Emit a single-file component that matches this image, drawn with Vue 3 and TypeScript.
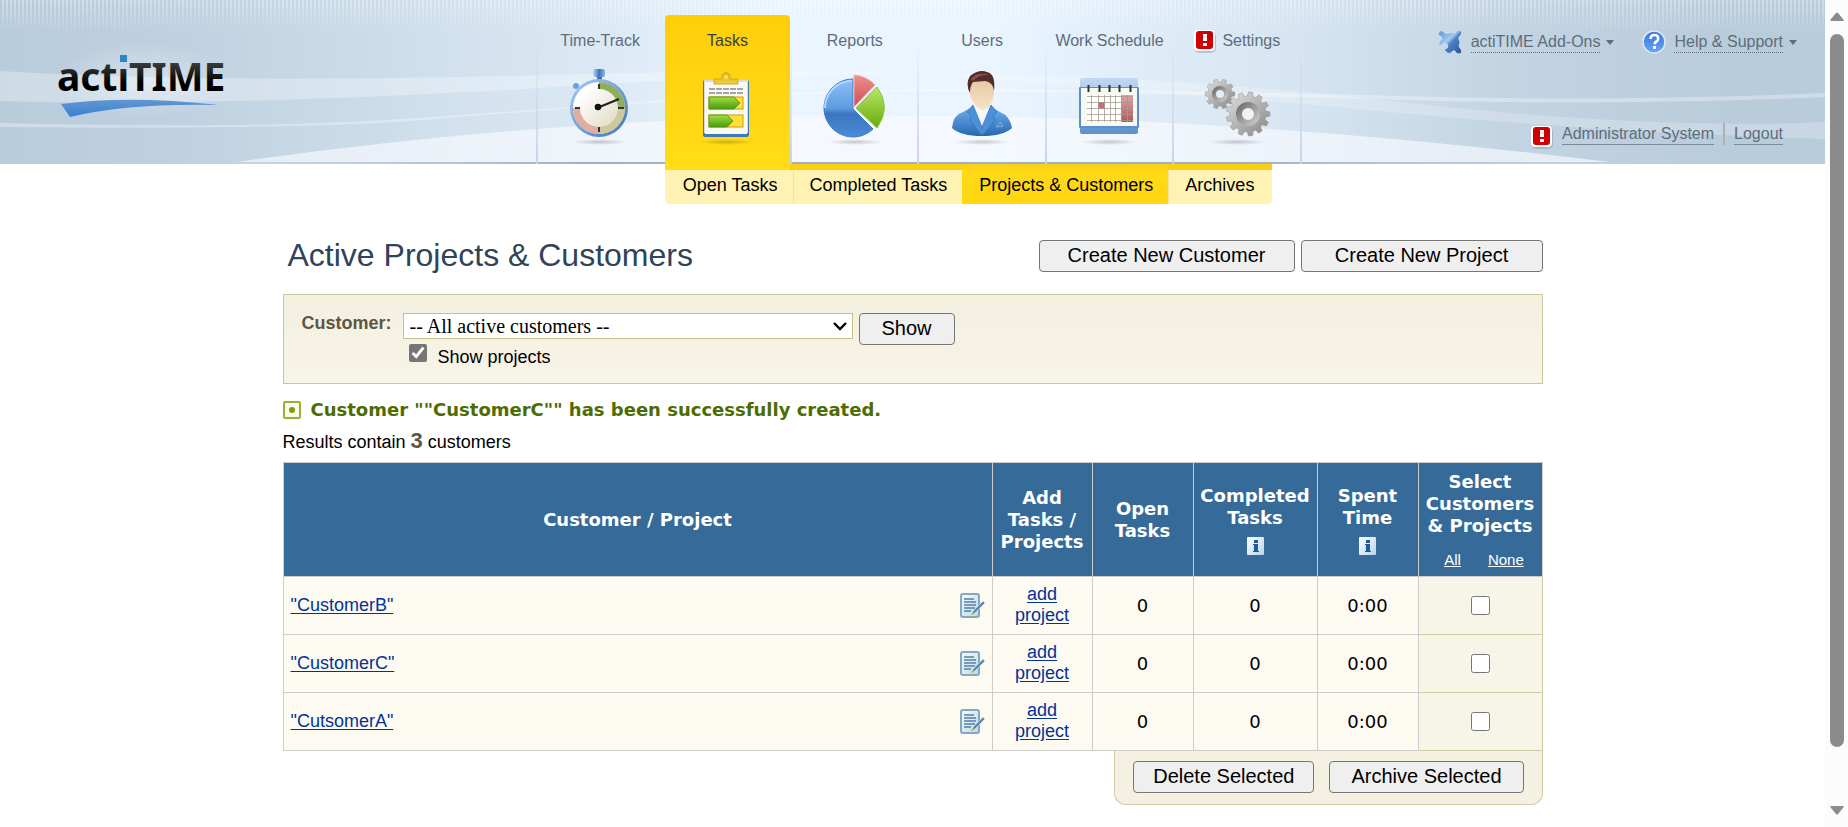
<script setup lang="ts">
import { ref } from 'vue'

interface Tab {
  id: string
  label: string
  alert?: boolean
}

interface Row {
  name: string
  open: number
  completed: number
  spent: string
}

const tabs: Tab[] = [
  { id: 'time', label: 'Time-Track' },
  { id: 'tasks', label: 'Tasks' },
  { id: 'reports', label: 'Reports' },
  { id: 'users', label: 'Users' },
  { id: 'schedule', label: 'Work Schedule' },
  { id: 'settings', label: 'Settings', alert: true },
]
const activeTab = 'tasks'

const subTabs: string[] = ['Open Tasks', 'Completed Tasks', 'Projects & Customers', 'Archives']
const activeSubTab = 'Projects & Customers'

const rows: Row[] = [
  { name: '"CustomerB"', open: 0, completed: 0, spent: '0:00' },
  { name: '"CustomerC"', open: 0, completed: 0, spent: '0:00' },
  { name: '"CutsomerA"', open: 0, completed: 0, spent: '0:00' },
]

const showProjects = ref(true)
const selected = ref<string[]>([])

function selectAll(): void {
  selected.value = rows.map((r) => r.name)
}
function selectNone(): void {
  selected.value = []
}

function gear(cx: number, cy: number, r: number, inner: number, teeth: number): string {
  const points: string[] = []
  const step = (Math.PI * 2) / teeth
  for (let i = 0; i < teeth; i++) {
    const a = i * step
    const corners: [number, number][] = [
      [-0.34, inner],
      [-0.2, r],
      [0.2, r],
      [0.34, inner],
    ]
    for (const [offset, radius] of corners) {
      const t = a + offset * step
      points.push(`${(cx + radius * Math.cos(t)).toFixed(2)},${(cy + radius * Math.sin(t)).toFixed(2)}`)
    }
  }
  return points.join(' ')
}
const smallGear = gear(19, 27, 15, 12, 10)
const bigGear = gear(47, 47, 22, 18, 13)
</script>

<template>
  <div class="screen">
    <div class="page">
      <header class="top">
        <svg class="waves" viewBox="0 0 1825 164" preserveAspectRatio="none" aria-hidden="true">
          <path d="M0 71 C180 82 380 79 540 75 S800 71 930 73 C760 75 620 82 540 88 C380 98 170 106 0 101Z" fill="#fff" opacity=".3" />
          <path d="M0 123 Q250 129 400 119 T664 100 Q800 91 930 89 Q1200 90 1400 96 T1825 93 L1825 97 Q1600 106 1400 100 T930 91 Q800 93 664 102 T400 122 Q250 130 0 127Z" fill="#fff" opacity=".32" />
          <path d="M930 73 Q1150 74 1400 102 T1825 122 L1825 139 Q1600 132 1400 113 T930 75Z" fill="#fff" opacity=".22" />
          <path d="M236 162 Q560 116 860 116 Q1200 112 1610 162Z" fill="#fafaff" opacity=".65" />
        </svg>
        <div class="stripes"></div>

        <div class="brand">
          <svg class="logo" width="190" height="80" viewBox="0 0 190 80" role="img" aria-label="actiTIME">
            <defs>
              <linearGradient id="ink" gradientUnits="userSpaceOnUse" x1="0" y1="20" x2="0" y2="51">
                <stop offset="0" stop-color="#444" />
                <stop offset=".75" stop-color="#000" />
              </linearGradient>
              <linearGradient id="stem" gradientUnits="userSpaceOnUse" x1="0" y1="20" x2="0" y2="51">
                <stop offset=".27" stop-color="#333" stop-opacity="0" />
                <stop offset=".27" stop-color="#333" />
                <stop offset=".75" stop-color="#000" />
              </linearGradient>
              <linearGradient id="swoosh" x1="0" y1="0" x2="0" y2="1">
                <stop offset="0" stop-color="#6397d1" />
                <stop offset="1" stop-color="#3580d4" />
              </linearGradient>
              <radialGradient id="glow">
                <stop offset="0" stop-color="#fff" stop-opacity=".38" />
                <stop offset="1" stop-color="#fff" stop-opacity="0" />
              </radialGradient>
            </defs>
            <ellipse cx="98" cy="40" rx="92" ry="38" fill="url(#glow)" />
            <text x="9" y="51" class="logo-text" fill="url(#ink)">act<tspan fill="url(#stem)">i</tspan>TIME</text>
            <rect x="72" y="15" width="7" height="7" fill="#2a86cc" />
            <path d="M13 64 Q80 55 171 65 Q80 63 22 77Z" fill="url(#swoosh)" />
          </svg>
        </div>

        <nav class="tabs" aria-label="Main">
          <div v-for="tab in tabs" :key="tab.id" class="tab" :class="{ active: tab.id === activeTab }">
            <a href="#" class="tab-link">
              <span class="tab-label">
                <svg v-if="tab.alert" class="alert" width="24" height="24" viewBox="0 0 24 24" aria-hidden="true">
                  <rect x="1" y="2" width="22" height="22" rx="5" fill="#7d8c99" opacity=".4" />
                  <rect x="1" y="1" width="21" height="21" rx="4" fill="#fff" />
                  <rect x="3" y="2" width="17" height="18" rx="3" fill="#d00000" />
                  <path d="M10 5h4v7h-4zM10 14h4v3h-4z" fill="#fff" />
                </svg>
                {{ tab.label }}
              </span>
              <svg class="tab-icon" width="72" height="78" viewBox="0 0 72 78" aria-hidden="true">
                <defs>
                  <radialGradient id="shade">
                    <stop offset="0" stop-color="#000" stop-opacity=".2" />
                    <stop offset="1" stop-color="#000" stop-opacity="0" />
                  </radialGradient>
                </defs>
                <ellipse cx="36" cy="75" rx="28" ry="3" fill="url(#shade)" />

                <g v-if="tab.id === 'time'">
                  <defs>
                    <linearGradient id="rim" x1="0" y1="0" x2="1" y2="1">
                      <stop offset="0" stop-color="#a9cdf6" />
                      <stop offset="1" stop-color="#3c74c0" />
                    </linearGradient>
                    <linearGradient id="face" x1="0" y1="0" x2="1" y2="1">
                      <stop offset=".2" stop-color="#fff" />
                      <stop offset="1" stop-color="#d9d3b4" />
                    </linearGradient>
                    <linearGradient id="knob">
                      <stop offset="0" stop-color="#bcd9f7" />
                      <stop offset=".5" stop-color="#3d74b8" />
                      <stop offset="1" stop-color="#8bb6e6" />
                    </linearGradient>
                  </defs>
                  <circle cx="12" cy="19" r="3" fill="#6da0de" />
                  <rect x="33" y="8" width="5" height="5" fill="#3d74b8" />
                  <rect x="29" y="2" width="12" height="8" rx="2" fill="url(#knob)" />
                  <circle cx="35" cy="41" r="29" fill="url(#rim)" />
                  <circle cx="35" cy="41" r="26" fill="url(#face)" />
                  <path d="M35 15a26 26 0 0 1 26 26h-7a19 19 0 0 0-19-19z" fill="#8eae5c" />
                  <path d="M61 41a26 26 0 0 1-26 26v-7a19 19 0 0 0 19-19z" fill="#cfc89c" />
                  <path d="M35 67a26 26 0 0 1-26-26h7a19 19 0 0 0 19 19z" fill="#e0ada0" />
                  <path d="M35 17v5M35 60v5M11 41h5M54 41h6" stroke="#333" stroke-width="2" />
                  <path d="M33 41l22-9" stroke="#222" stroke-width="2.2" />
                  <circle cx="34" cy="40" r="3.3" fill="#111" />
                </g>

                <g v-else-if="tab.id === 'tasks'">
                  <defs>
                    <linearGradient id="bar" x1="0" y1="0" x2="0" y2="1">
                      <stop offset="0" stop-color="#a3df45" />
                      <stop offset="1" stop-color="#489b0b" />
                    </linearGradient>
                    <linearGradient id="clip" x1="0" y1="0" x2="0" y2="1">
                      <stop offset="0" stop-color="#dab422" />
                      <stop offset="1" stop-color="#f1cf40" />
                    </linearGradient>
                  </defs>
                  <rect x="12" y="13" width="46" height="57" rx="2" fill="#3c79bc" />
                  <path d="M13 13h44v53H13z" fill="#d6dcdf" />
                  <rect x="14" y="15" width="42" height="52" fill="#faf9f4" />
                  <path d="M18 22h35M18 26h35" stroke="#a3a5ab" stroke-width="2" stroke-dasharray="6 1" />
                  <g stroke="#c79d12">
                    <rect x="18" y="30" width="34" height="12" fill="#ffdf34" />
                    <rect x="18" y="48" width="34" height="12" fill="#ffdf34" />
                  </g>
                  <path d="M18 30h25l6 6-6 6H18z" fill="url(#bar)" stroke="#589f15" />
                  <path d="M18 48h18l6 6-6 6H18z" fill="url(#bar)" stroke="#589f15" />
                  <path d="M23 12h8V8q4-5 8 0v4h8v5H23z" fill="url(#clip)" stroke="#d2ac25" />
                  <circle cx="35" cy="10" r="2" fill="#ffe25f" />
                </g>

                <g v-else-if="tab.id === 'reports'">
                  <defs>
                    <linearGradient id="pb" x1="0" y1="0" x2="0" y2="1">
                      <stop offset="0" stop-color="#8ec1f5" />
                      <stop offset=".5" stop-color="#5e9cdf" />
                      <stop offset=".6" stop-color="#3b75bf" />
                      <stop offset="1" stop-color="#4b8bd7" />
                    </linearGradient>
                    <linearGradient id="pg" x1="0" y1="0" x2="0" y2="1">
                      <stop offset="0" stop-color="#b9e866" />
                      <stop offset="1" stop-color="#66ab0d" />
                    </linearGradient>
                    <linearGradient id="pr" x1="0" y1="0" x2="0" y2="1">
                      <stop offset="0" stop-color="#f18e8e" />
                      <stop offset="1" stop-color="#c75057" />
                    </linearGradient>
                  </defs>
                  <path d="M34 12a29 29 0 1 0 20 50L34 42z" fill="url(#pb)" stroke="#3d7cc9" />
                  <path d="M33 14a27 27 0 0 0-27 27" fill="none" stroke="#b0d6ff" stroke-width="2" />
                  <path d="M35 8q13 1 21 10L35 40z" fill="url(#pr)" stroke="#f2b4b4" />
                  <path d="M58 20q15 20 0 41L37 41z" fill="url(#pg)" stroke="#8bc43c" />
                </g>

                <g v-else-if="tab.id === 'users'">
                  <defs>
                    <linearGradient id="suit" x1="0" y1="0" x2="0" y2="1">
                      <stop offset="0" stop-color="#70b1ef" />
                      <stop offset="1" stop-color="#2867ae" />
                    </linearGradient>
                    <linearGradient id="skin" x1="0" y1="0" x2="0" y2="1">
                      <stop offset="0" stop-color="#e8c7a0" />
                      <stop offset="1" stop-color="#f7e3c8" />
                    </linearGradient>
                  </defs>
                  <path d="M6 61q1-13 11-16l9-5h19l9 5q10 4 12 16-9 8-30 8T6 61z" fill="url(#suit)" />
                  <path d="M28 37h15l3 6-10 24-10-24z" fill="#f4f7f8" />
                  <path d="M27 38l-6 7 4 4-1 4 11 15 1-8zM45 38l6 7-4 4 2 4-12 15-1-8z" fill="#4c91d7" stroke="#2f70ba" stroke-width=".7" />
                  <path d="M23 21q1-9 13-9 12 1 12 9v6q-2 11-7 14-5 4-10-1-7-7-7-14z" fill="url(#skin)" />
                  <path d="M24 26q-5-9 0-17Q33 2 41 5q9 2 7 19-1-9-9-10l-12 1q-3 4-3 11z" fill="#532d2b" />
                  <path d="M25 12q6-8 19-4-12-1-17 6z" fill="#8e5149" />
                  <path d="M50 60l4-5 3 4z" fill="none" stroke="#7db6e9" />
                </g>

                <g v-else-if="tab.id === 'schedule'">
                  <defs>
                    <linearGradient id="cal" x1="0" y1="0" x2="0" y2="1">
                      <stop offset="0" stop-color="#c3d9f2" />
                      <stop offset="1" stop-color="#5990cd" />
                    </linearGradient>
                    <linearGradient id="weekend" x1="0" y1="0" x2="0" y2="1">
                      <stop offset="0" stop-color="#e0a4a4" />
                      <stop offset="1" stop-color="#b95558" />
                    </linearGradient>
                  </defs>
                  <rect x="7" y="11" width="58" height="56" rx="2" fill="url(#cal)" />
                  <rect x="6" y="20" width="60" height="41" rx="1" fill="#5b8fcc" />
                  <rect x="8" y="21" width="56" height="38" fill="#f9f8f1" />
                  <rect x="14" y="28" width="46" height="27" fill="#fff" />
                  <rect x="48" y="28" width="12" height="27" fill="url(#weekend)" />
                  <rect x="25" y="35" width="7" height="7" fill="#cc6b6d" />
                  <path d="M18.500 28v27M25.500 28v27M31.500 28v27M37.500 28v27M42.500 28v27M48.500 28v27M54.500 28v27M14 29.500h46M14 35.500h46M14 41.500h46M14 47.500h46M14 53.500h46" stroke="#a49b91" stroke-opacity=".8" />
                  <path d="M15.500 18v7M26.500 18v7M36.500 18v7M46.500 18v7M57.500 18v7" stroke="#333" stroke-width="2" />
                </g>

                <g v-else>
                  <defs>
                    <linearGradient id="steel" x1="0" y1="0" x2="1" y2="1">
                      <stop offset="0" stop-color="#e2e2e2" />
                      <stop offset="1" stop-color="#858585" />
                    </linearGradient>
                    <linearGradient id="hub" x1="0" y1="0" x2="1" y2="1">
                      <stop offset="0" stop-color="#707070" />
                      <stop offset="1" stop-color="#c8c8c8" />
                    </linearGradient>
                  </defs>
                  <polygon :points="smallGear" fill="url(#steel)" stroke="#a5a5a5" stroke-width=".6" />
                  <circle cx="19" cy="27" r="6" fill="#e4edf5" stroke="url(#hub)" stroke-width="4" />
                  <polygon :points="bigGear" fill="url(#steel)" stroke="#999" stroke-width=".6" />
                  <circle cx="47" cy="47" r="9" fill="#eef3f8" stroke="url(#hub)" stroke-width="6" />
                </g>
              </svg>
            </a>
            <div v-if="tab.id === activeTab" class="submenu">
              <a v-for="sub in subTabs" :key="sub" href="#" :class="{ current: sub === activeSubTab }">{{ sub }}</a>
            </div>
          </div>
        </nav>

        <div class="utility">
          <div class="util-row menus">
            <button type="button" class="menu-button">
              <svg width="26" height="26" viewBox="0 0 26 26" aria-hidden="true">
                <defs>
                  <linearGradient id="puzzle" gradientUnits="userSpaceOnUse" x1="2" y1="2" x2="24" y2="24">
                    <stop offset="0" stop-color="#5f95d8" />
                    <stop offset=".42" stop-color="#a6c8ee" />
                    <stop offset=".55" stop-color="#4c80c2" />
                    <stop offset="1" stop-color="#2a5a9c" />
                  </linearGradient>
                </defs>
                <path d="M2 3Q4 0 7 3Q9 5 12 4Q15 2 18 4Q19 1 22 1Q26 2 24 6Q21 8 22 11Q24 13 22 16Q22 19 24 20Q26 24 22 25Q19 25 18 22Q16 21 15 23Q12 26 9 23L7 20Q11 20 11 17Q10 13 6 15L4 17Q0 15 3 12L5 10Q5 8 3 7Q0 6 2 3Z" fill="url(#puzzle)" stroke="#dbe7f4" stroke-width=".7" />
              </svg>
              <span>actiTIME Add-Ons</span>
              <i class="caret"></i>
            </button>
            <button type="button" class="menu-button">
              <svg width="24" height="24" viewBox="0 0 24 24" aria-hidden="true">
                <defs>
                  <linearGradient id="help" x1="0" y1="0" x2="0" y2="1">
                    <stop offset="0" stop-color="#3a76dc" />
                    <stop offset="1" stop-color="#6ba3f8" />
                  </linearGradient>
                </defs>
                <circle cx="12" cy="12" r="11" fill="url(#help)" stroke="#dbe9fb" stroke-width="1.500" />
                <path d="M8.500 9q0-4 4-4 3.700 0 3.700 3.400 0 2-2 3.200-1.500 1-1.500 2.600" fill="none" stroke="#fff" stroke-width="2.600" />
                <rect x="11" y="16" width="3" height="3" fill="#fff" />
              </svg>
              <span>Help &amp; Support</span>
              <i class="caret"></i>
            </button>
          </div>
          <div class="util-row account">
            <svg class="alert" width="24" height="24" viewBox="0 0 24 24" aria-hidden="true">
              <rect x="1" y="2" width="22" height="22" rx="5" fill="#7d8c99" opacity=".4" />
              <rect x="1" y="1" width="21" height="21" rx="4" fill="#fff" />
              <rect x="3" y="2" width="17" height="18" rx="3" fill="#d00000" />
              <path d="M10 5h4v7h-4zM10 14h4v3h-4z" fill="#fff" />
            </svg>
            <a href="#">Administrator System</a>
            <span class="divider"></span>
            <a href="#">Logout</a>
          </div>
        </div>
      </header>

      <main class="content">
        <div class="heading">
          <h1>Active Projects &amp; Customers</h1>
          <div class="heading-actions">
            <button type="button" class="btn wide">Create New Customer</button>
            <button type="button" class="btn mid">Create New Project</button>
          </div>
        </div>

        <form class="filter" @submit.prevent>
          <label class="filter-label" for="customer">Customer:</label>
          <div class="filter-fields">
            <div class="filter-line">
              <div class="select-box">
                <select id="customer">
                  <option>-- All active customers --</option>
                </select>
                <svg class="chevron" width="14" height="10" viewBox="0 0 14 10" aria-hidden="true">
                  <path d="M1 2l6 6 6-6" fill="none" stroke="#000" stroke-width="2.400" />
                </svg>
              </div>
              <button type="submit" class="btn show">Show</button>
            </div>
            <label class="check-line">
              <input v-model="showProjects" type="checkbox" />
              <span>Show projects</span>
            </label>
          </div>
        </form>

        <p class="message">
          <svg width="18" height="18" viewBox="0 0 18 18" aria-hidden="true">
            <rect x="1" y="1" width="16" height="16" rx="1" fill="#f7fbe8" stroke="#98ae36" stroke-width="2" />
            <circle cx="9" cy="9" r="3" fill="#7b9d0a" />
          </svg>
          <span>Customer ""CustomerC"" has been successfully created.</span>
        </p>
        <p class="results">Results contain <b>3</b> customers</p>

        <table class="grid">
          <colgroup>
            <col />
            <col class="c-add" />
            <col class="c-num" />
            <col class="c-wide" />
            <col class="c-num" />
            <col class="c-wide" />
          </colgroup>
          <thead>
            <tr>
              <th scope="col">Customer / Project</th>
              <th scope="col">Add Tasks / Projects</th>
              <th scope="col">Open Tasks</th>
              <th v-for="title in ['Completed Tasks', 'Spent Time']" :key="title" scope="col">
                {{ title }}
                <svg class="info" width="17" height="18" viewBox="0 0 17 18" aria-hidden="true">
                  <defs>
                    <linearGradient id="infobg" x1="0" y1="0" x2="1" y2="1">
                      <stop offset="0" stop-color="#fff" />
                      <stop offset="1" stop-color="#b4d6ef" />
                    </linearGradient>
                  </defs>
                  <rect width="17" height="18" rx="1" fill="url(#infobg)" />
                  <path d="M7 3h4v3H7zM6 7h5v7h1v1H6v-1h1V8H6z" fill="#1f5c95" />
                </svg>
              </th>
              <th scope="col">
                Select Customers &amp; Projects
                <span class="pickers">
                  <a href="#" @click.prevent="selectAll">All</a>
                  <a href="#" @click.prevent="selectNone">None</a>
                </span>
              </th>
            </tr>
          </thead>
          <tbody>
            <tr v-for="row in rows" :key="row.name">
              <td>
                <div class="name-cell">
                  <a href="#">{{ row.name }}</a>
                  <a href="#" class="edit" :aria-label="'Edit ' + row.name">
                    <svg width="26" height="26" viewBox="0 0 26 26" aria-hidden="true">
                      <defs>
                        <linearGradient id="sheet" x1="0" y1="0" x2="1" y2="1">
                          <stop offset="0" stop-color="#f7fbfd" />
                          <stop offset="1" stop-color="#bcd8e9" />
                        </linearGradient>
                      </defs>
                      <rect x="2" y="1" width="18" height="23" rx="2" fill="url(#sheet)" stroke="#86a9c2" stroke-width="2" />
                      <path d="M5 6h10M5 9h12M5 12h12M5 15h11M5 18h7" stroke="#5580a2" stroke-width="1.500" />
                      <path d="M14 18L24 8l2 2-10 10-3 2z" fill="#5d8bae" stroke="#e3f0f8" stroke-width=".6" />
                      <path d="M12 22l1-3 2 2z" fill="#e6b800" />
                    </svg>
                  </a>
                </div>
              </td>
              <td class="add"><a href="#">add project</a></td>
              <td class="num">{{ row.open }}</td>
              <td class="num">{{ row.completed }}</td>
              <td class="num">{{ row.spent }}</td>
              <td class="pick">
                <input v-model="selected" type="checkbox" :value="row.name" :aria-label="'Select ' + row.name" />
              </td>
            </tr>
          </tbody>
        </table>

        <div class="bulk">
          <button type="button" class="btn snug">Delete Selected</button>
          <button type="button" class="btn">Archive Selected</button>
        </div>
      </main>
    </div>

    <div class="scrollbar" aria-hidden="true">
      <svg width="14" height="10" viewBox="0 0 14 10"><path d="M1 9Q-.5 9 1 7L6 1q1-1 2 0l5 6q1.500 2 0 2z" fill="#8b8b8b" /></svg>
      <div class="track"><div class="thumb"></div></div>
      <svg width="14" height="10" viewBox="0 0 14 10"><path d="M1 1Q-.5 1 1 3l5 6q1 1 2 0l5-6q1.500-2 0-2z" fill="#8b8b8b" /></svg>
    </div>
  </div>
</template>

<style>
body {
  margin: 0;
  background: #fff;
}
</style>

<style scoped>
* {
  box-sizing: border-box;
}
.screen {
  display: flex;
  min-height: 100vh;
  font-family: 'Liberation Sans', Arial, sans-serif;
  font-size: 18px;
  color: #000;
}
.page {
  flex: 1;
  min-width: 0;
}

/* header */
.top {
  position: relative;
  display: flex;
  height: 164px;
  padding: 0 28px 0 40px;
  background: linear-gradient(90deg, #b9ccdc 0%, #c0d1e1 11%, #cbdce9 20%, #d8e6f1 30%, #eaf5ff 43%, #eaf5ff 54%, #d6e5f1 71%, #c3d4e3 82%, #b9ccdc 95%);
}
.top::after {
  content: '';
  position: absolute;
  left: 0;
  right: 0;
  bottom: 0;
  height: 2px;
  background: linear-gradient(90deg, transparent 14%, #9db1c3 32%, #9db1c3 68%, transparent 86%);
  pointer-events: none;
}
.waves {
  position: absolute;
  inset: 0;
  width: 100%;
  height: 100%;
}
.stripes {
  position: absolute;
  inset: 0 0 auto;
  height: 32px;
  background: repeating-linear-gradient(90deg, transparent 0 2px, rgba(255, 255, 255, 0.35) 2px 4px);
  mask-image: linear-gradient(#000, transparent);
}
.brand {
  position: relative;
  flex: 1;
}
.logo {
  display: block;
  margin: 40px 0 0 8px;
}
.logo-text {
  font: 700 39px 'Noto Sans', sans-serif;
}
.tabs {
  position: relative;
  z-index: 1;
  display: flex;
  width: 766px;
  border-right: 2px solid;
  border-image: linear-gradient(transparent 25%, #c6d4ea) 1;
}
.tab {
  position: relative;
  flex: 1;
  border-left: 2px solid;
  border-image: linear-gradient(transparent 25%, #c6d4ea) 1;
}
.tab-link {
  display: flex;
  flex-direction: column;
  align-items: center;
  gap: 16px;
  height: 164px;
  padding-top: 31px;
  color: #5d6d7b;
  text-decoration: none;
}
.tab-label {
  display: flex;
  align-items: center;
  gap: 5px;
  height: 20px;
  font-size: 16px;
  line-height: 20px;
  white-space: nowrap;
}
.tab.active {
  border-image: none;
  border-color: transparent;
}
.tab.active .tab-link {
  position: relative;
  z-index: 2;
  height: 155px;
  margin-top: 15px;
  padding-top: 16px;
  border-radius: 4px 4px 0 0;
  background: linear-gradient(#ffce0b, #ffdd17);
  color: #333f48;
}
.alert {
  flex: none;
}
.submenu {
  position: absolute;
  z-index: 1;
  top: 164px;
  left: 0;
  display: flex;
  border-top: 6px solid #f8cf12;
}
.submenu a {
  height: 34px;
  padding: 0 15px 0 16px;
  background: #fff2b3;
  color: #000;
  font-size: 18px;
  line-height: 30px;
  text-decoration: none;
  white-space: nowrap;
}
.submenu a + a {
  border-left: 1px solid #f1e3a5;
}
.submenu a:first-child {
  padding-left: 18px;
  border-radius: 0 0 0 4px;
}
.submenu a:last-child {
  padding-right: 18px;
  border-radius: 0 0 4px;
}
.submenu a.current {
  margin-top: -6px;
  height: 40px;
  padding-top: 6px;
  border-color: #ffd814;
  background: linear-gradient(#f9d017, #ffda17 20%, #ffd610);
}

.utility {
  position: relative;
  flex: 1;
  display: flex;
  flex-direction: column;
  align-items: flex-end;
  gap: 68px;
  padding-top: 30px;
}
.util-row {
  display: flex;
  align-items: center;
  height: 24px;
  font-size: 16px;
  white-space: nowrap;
}
.menus {
  gap: 28px;
}
.menu-button {
  display: flex;
  align-items: center;
  padding: 0;
  border: 0;
  background: none;
  color: #5d6d7b;
  font: inherit;
  cursor: pointer;
}
.menu-button span {
  margin: 0 6px 0 8px;
  border-bottom: 1px dotted #5d6d7b;
  line-height: 20px;
}
.caret {
  border: 4px solid transparent;
  border-top: 5px solid #5d6d7b;
  border-bottom: 0;
}
.account {
  padding-right: 14px;
}
.account a {
  border-bottom: 1px solid #7b8b99;
  color: #5d6d7b;
  line-height: 20px;
  text-decoration: none;
}
.account .alert {
  margin: 6px 8px 0 0;
}
.divider {
  width: 2px;
  height: 22px;
  margin: 0 9px;
  background: #aab0b6;
}

/* content */
.content {
  display: flex;
  flex-direction: column;
  max-width: 1260px;
  margin: 0 auto;
  padding: 76px 0 22px;
}
.heading {
  display: flex;
  justify-content: space-between;
  height: 32px;
  padding-left: 5px;
}
h1 {
  margin: 0;
  color: #2f435a;
  font-size: 32px;
  font-weight: 400;
  line-height: 30px;
}
.heading-actions {
  display: flex;
  gap: 6px;
}
.btn {
  height: 32px;
  padding: 0 21px 2px;
  border: 1px solid #767676;
  border-radius: 4px;
  background: #efefef;
  color: #000;
  font: 20px/24px 'Liberation Sans', Arial, sans-serif;
  white-space: nowrap;
}
.btn.wide {
  min-width: 256px;
}
.btn.mid {
  min-width: 242px;
}
.btn.show {
  min-width: 96px;
}
.btn.snug {
  padding: 0 19px 2px;
}
.filter {
  display: flex;
  gap: 11px;
  height: 90px;
  margin-top: 22px;
  padding: 18px;
  border: 1px solid #ccc79a;
  background: linear-gradient(#f4f0e0, #f7f4e8);
}
.filter-label {
  color: #5f5641;
  font-weight: 700;
  line-height: 20px;
}
.filter-line {
  display: flex;
  align-items: flex-start;
  gap: 6px;
}
.select-box {
  position: relative;
  height: 26px;
}
select {
  width: 450px;
  height: 26px;
  padding: 0 24px 0 6px;
  border: 1px solid #c9c089;
  border-radius: 0;
  appearance: none;
  background-color: #fff;
  color: #000;
  font: 20px 'Liberation Serif', 'Times New Roman', serif;
}
.chevron {
  position: absolute;
  top: 8px;
  right: 6px;
  pointer-events: none;
}
.check-line {
  display: flex;
  gap: 11px;
  margin: -1px 0 0 6px;
}
.check-line input[type='checkbox'] {
  width: 18px;
  height: 18px;
}
.check-line span {
  padding-top: 2px;
  line-height: 22px;
}
input[type='checkbox'] {
  width: 19px;
  height: 19px;
  margin: 0;
  accent-color: #767676;
}
.message {
  display: flex;
  align-items: center;
  gap: 10px;
  margin: 15px 0 0;
  color: #4e6c00;
  font: 700 18px/22px 'DejaVu Sans', Verdana, sans-serif;
}
.results {
  margin: 7px 0 0;
  line-height: 26px;
}
.results b {
  color: #5f5641;
  font-size: 22px;
}

/* customer list */
.grid {
  width: 100%;
  margin-top: 7px;
  border-collapse: collapse;
  table-layout: fixed;
}
.c-add {
  width: 100px;
}
.c-num {
  width: 101px;
}
.c-wide {
  width: 124px;
}
th,
td {
  border: 1px solid #ccc;
}
th {
  height: 114px;
  padding: 0 5px;
  background: #366a98;
  color: #fff;
  font: 700 18px/22px 'DejaVu Sans', Verdana, sans-serif;
}
.info {
  display: block;
  margin: 8px auto 0;
}
.pickers {
  display: flex;
  justify-content: center;
  gap: 27px;
  padding: 14px 0 0 8px;
  font: 15px/18px 'Liberation Sans', Arial, sans-serif;
}
.pickers a {
  color: #fff;
}
td {
  height: 58px;
  padding: 0 7px;
  background: #fdfaf2;
  text-align: center;
}
td a {
  color: #039;
  text-underline-offset: 2px;
}
.name-cell {
  display: flex;
  align-items: center;
  justify-content: space-between;
}
.edit {
  display: flex;
}
.add {
  padding: 0 20px 2px;
  line-height: 21px;
}
.num {
  font-family: 'DejaVu Sans', Verdana, sans-serif;
}
.pick {
  border-color: #d0cba2;
  background: #f7f5e8;
}
.pick input {
  display: block;
  margin: 0 auto;
}
.bulk {
  display: flex;
  align-self: flex-end;
  gap: 15px;
  padding: 10px 18px 11px;
  border: 1px solid #d0cba2;
  border-top: 0;
  border-radius: 0 0 12px 12px;
  background: #f5f1e2;
}

/* window scrollbar */
.scrollbar {
  display: flex;
  flex-direction: column;
  align-items: center;
  gap: 12px;
  width: 23px;
  padding: 12px 0;
  background: #fcfcfc;
}
.track {
  flex: 1;
}
.thumb {
  width: 14px;
  height: 94%;
  border-radius: 7px;
  background: #8b8b8b;
}
</style>
